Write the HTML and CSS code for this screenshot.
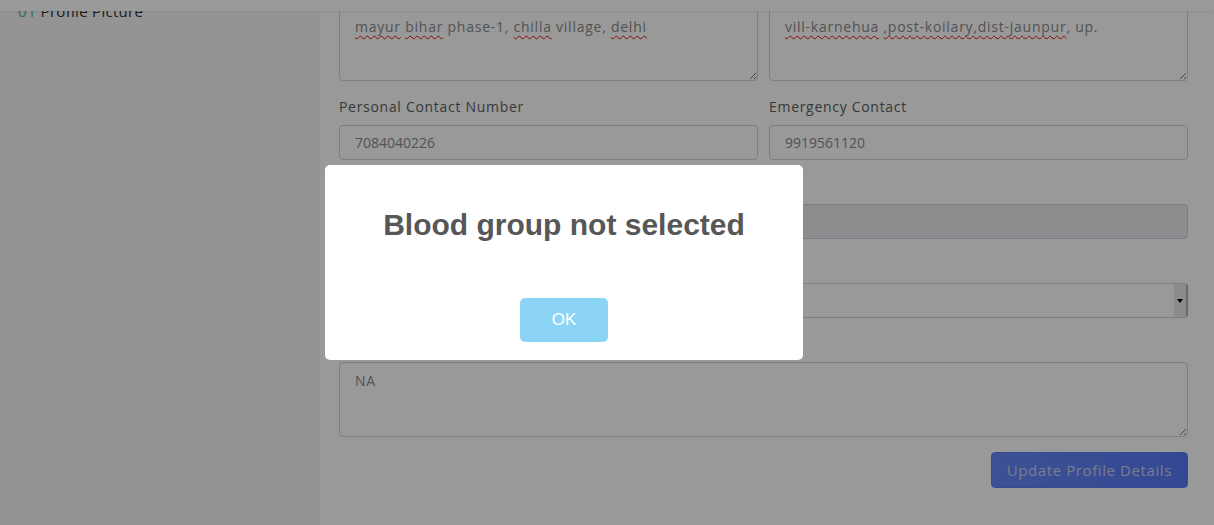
FILE: index.html
```html
<!DOCTYPE html>
<html lang="en">
<head>
<meta charset="utf-8">
<title>Profile</title>
<link rel="stylesheet" href="styles.css">
</head>
<body>
<header class="topbar"></header>
<div class="layout">
  <aside class="sidebar">
    <div class="step"><span class="num">01</span> Profile Picture</div>
  </aside>
  <main class="main">
    <div class="row">
      <div class="field first">
        <div class="textarea"><span class="sp">mayur</span> <span class="sp">bihar</span> phase-1, <span class="sp">chilla</span> village, <span class="sp">delhi</span></div>
      </div>
      <div class="field first">
        <div class="textarea"><span class="sp">vill-karnehua</span> <span class="sp">,post-koilary,dist-jaunpur</span>, up.</div>
      </div>
    </div>
    <div class="row">
      <div class="field">
        <label class="label">Personal Contact Number</label>
        <div class="input">7084040226</div>
      </div>
      <div class="field">
        <label class="label">Emergency Contact</label>
        <div class="input">9919561120</div>
      </div>
    </div>
    <div class="field">
      <label class="label">Email Address</label>
      <div class="input disabled"></div>
    </div>
    <div class="field">
      <label class="label">Blood Group</label>
      <div class="select"><span class="select-value"></span><span class="select-btn"><span class="caret"></span></span></div>
    </div>
    <div class="field">
      <label class="label">Medical History</label>
      <div class="textarea tall">NA</div>
    </div>
    <div class="actions">
      <button class="btn-update" type="button">Update Profile Details</button>
    </div>
  </main>
</div>

<div class="overlay"></div>
<div class="modal">
  <h2 class="modal-title">Blood group not selected</h2>
  <div class="modal-actions">
    <button class="btn-ok" type="button">OK</button>
  </div>
</div>
</body>
</html>
```

FILE: styles.css
```css
* { box-sizing: border-box; }

html, body {
  margin: 0;
  height: 100%;
  overflow: hidden;
}

body {
  font-family: "Open Sans", "DejaVu Sans", sans-serif;
  background: #ffffff;
  color: #555;
}

.topbar {
  position: fixed;
  top: 0;
  left: 0;
  right: 0;
  height: 11px;
  background: #ffffff;
  box-shadow: 0 1px 3px rgba(0, 0, 0, 0.08);
  z-index: 5;
}

.layout {
  display: flex;
  min-height: 100%;
}

.sidebar {
  width: 319px;
  flex: none;
  background: #f7f7f7;
  border-right: 1px solid #f1f1f1;
  padding: 0 0 0 18px;
}

.step {
  font-size: 15px;
  line-height: 20px;
  margin-top: 1px;
  color: #333;
  letter-spacing: 0.3px;
}

.step .num {
  color: #4fb3a9;
  letter-spacing: 0.6px;
}

.main {
  flex: 1;
  background: #ffffff;
  padding: 8px 26px 0 20px;
}

.row {
  display: flex;
  gap: 11px;
}

.row .field {
  flex: 1;
  min-width: 0;
}

.field {
  margin-bottom: 15px;
}

.label {
  display: block;
  font-size: 14px;
  line-height: 21px;
  margin-bottom: 8px;
  color: #5e5e5e;
  letter-spacing: 0.7px;
}

.textarea,
.input,
.select {
  border: 1px solid #ced4da;
  border-radius: 4px;
  background: #ffffff;
  font-size: 14px;
  color: #8a8a8a;
}

.textarea {
  position: relative;
  height: 73px;
  padding: 6px 15px;
  line-height: 24px;
  letter-spacing: 0.75px;
}

.textarea.tall {
  height: 75px;
}

.textarea::after {
  content: "";
  position: absolute;
  right: 1px;
  bottom: 1px;
  width: 9px;
  height: 9px;
  background: repeating-linear-gradient(135deg, transparent 0 2px, #777 2px 3px);
  clip-path: polygon(100% 0, 100% 100%, 0 100%);
}

.sp {
  text-decoration: underline wavy #e01010;
  text-decoration-thickness: 1px;
  text-underline-offset: 3px;
  text-decoration-skip-ink: none;
}

.input {
  height: 35px;
  padding: 0 15px;
  line-height: 33px;
}

.input.disabled {
  background: #e9ecef;
}

.select {
  height: 35px;
  display: flex;
  justify-content: space-between;
  overflow: hidden;
  border-right: 2px solid #b0b0b0;
}

.select-btn {
  width: 12px;
  background: #e8e8e8;
  display: flex;
  align-items: center;
  justify-content: center;
}

.caret {
  width: 0;
  height: 0;
  border-left: 3px solid transparent;
  border-right: 3px solid transparent;
  border-top: 4px solid #000;
}

.actions {
  display: flex;
  justify-content: flex-end;
}

.btn-update {
  height: 36px;
  padding: 0 15px;
  border: 1px solid #5b7cf3;
  border-radius: 4px;
  background: linear-gradient(90deg, #6688f9, #5878f6);
  color: #c9d0ea;
  font-family: "Open Sans", sans-serif;
  font-size: 15px;
  letter-spacing: 0.6px;
}

.overlay {
  position: fixed;
  inset: 0;
  background: rgba(0, 0, 0, 0.4);
  z-index: 10;
}

.modal {
  position: fixed;
  left: 325px;
  top: 165px;
  width: 478px;
  height: 195px;
  background: #ffffff;
  border-radius: 5px;
  padding: 17px;
  z-index: 11;
  text-align: center;
  font-family: "Liberation Sans", Arial, sans-serif;
}

.modal-title {
  margin: 23px 0 0;
  font-size: 30px;
  line-height: 40px;
  font-weight: 700;
  color: #575757;
}

.modal-actions {
  margin-top: 53px;
}

.btn-ok {
  width: 88px;
  height: 44px;
  border: none;
  border-radius: 5px;
  background: #8cd4f5;
  color: #ffffff;
  font-family: "Liberation Sans", Arial, sans-serif;
  font-size: 17px;
}
```
